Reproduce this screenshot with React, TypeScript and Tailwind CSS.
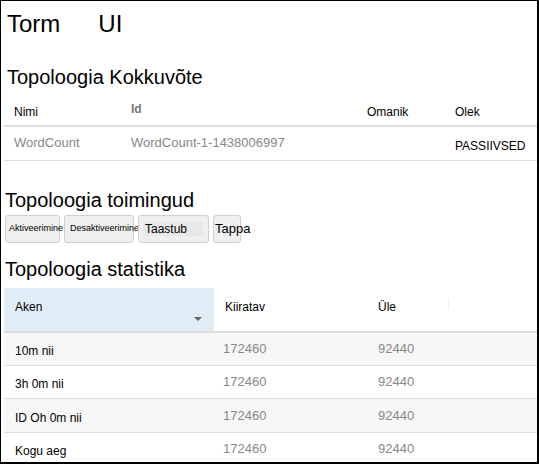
import React from "react";

const F = { fontFamily: '"Liberation Sans", Arial, sans-serif' };

function Caret() {
  return (
    <svg width="8" height="4" viewBox="0 0 8 4" className="absolute right-[11px] top-[29px]">
      <path d="M0 0 L8 0 L4 4 Z" fill="#666" />
    </svg>
  );
}

export default function App() {
  const rows = [
    { r: "10m nii", h: "h-[33px]" },
    { r: "3h 0m nii", h: "h-[33px]" },
    { r: "ID Oh 0m nii", h: "h-[34px]" },
    { r: "Kogu aeg", h: "h-[33px]" },
  ];
  return (
    <div
      style={F}
      className="w-[539px] h-[464px] bg-white overflow-hidden border-l border-t border-r-2 border-b-2 border-black text-black"
    >
      <div className="pl-[3px]">
        {/* Title */}
        <div className="mt-[9px] h-[28px] leading-[28px] text-[24px] flex gap-[38px] pl-[3px]">
          <span>Torm</span>
          <span>UI</span>
        </div>

        {/* Heading 1 */}
        <div className="mt-[27px] h-[24px] leading-[24px] text-[20px] pl-[3px]">Topoloogia Kokkuvõte</div>

        {/* Summary table */}
        <div className="flex h-[38px] border-b-2 border-[#dddddd] text-[12px] leading-[16px]">
          <div className="w-[117px] pl-[10px] pt-[15px]">Nimi</div>
          <div className="w-[236px] pl-[10px] pt-[12px] font-bold text-[#777777]">Id</div>
          <div className="w-[88px] pl-[10px] pt-[15px]">Omanik</div>
          <div className="flex-1 pl-[10px] pt-[15px]">Olek</div>
        </div>
        <div className="flex h-[34px] border-b border-[#dddddd] leading-[16px]">
          <div className="w-[117px] pl-[10px] pt-[8px] text-[13px] text-[#888888]">WordCount</div>
          <div className="w-[236px] pl-[10px] pt-[8px] text-[13px] text-[#888888]">WordCount-1-1438006997</div>
          <div className="w-[88px]"></div>
          <div className="flex-1 pl-[10px] pt-[11px] text-[12px]">PASSIIVSED</div>
        </div>

        {/* Heading 2 */}
        <div className="mt-[27px] h-[24px] leading-[24px] text-[20px] pl-[1px]">Topoloogia toimingud</div>

        {/* Buttons */}
        <div className="mt-[3px] flex gap-[4px] pl-[1px]">
          <button className="w-[55px] h-[28px] bg-[#efefef] border border-[#d0d0d0] rounded-[3px] flex items-center pl-[3px] text-[9px] whitespace-nowrap overflow-visible">
            Aktiveerimine
          </button>
          <button className="w-[70px] h-[28px] bg-[#efefef] border border-[#d0d0d0] rounded-[3px] flex items-center pl-[5px] text-[9px] whitespace-nowrap overflow-visible">
            Desaktiveerimine
          </button>
          <button className="w-[71px] h-[28px] bg-[#efefef] border border-[#d0d0d0] rounded-[3px] flex items-center pl-[4px] text-[12px] whitespace-nowrap">
            <span className="bg-[#e8e8e8] w-[60px] text-left pl-[2px] leading-[14px]">Taastub</span>
          </button>
          <button className="w-[28px] h-[28px] bg-[#efefef] border border-[#d0d0d0] rounded-[3px] flex items-center pl-[1px] text-[13px] whitespace-nowrap overflow-visible">
            Tappa
          </button>
        </div>

        {/* Heading 3 */}
        <div className="mt-[14px] h-[24px] leading-[24px] text-[20px] pl-[1px]">Topoloogia statistika</div>

        {/* Stats table */}
        <div className="mt-[7px]">
          <div className="flex h-[45px] border-b-2 border-[#dddddd] text-[12px] leading-[16px]">
            <div className="relative w-[209px] bg-[#e1edf6] pl-[11px] pt-[11px]">
              Aken
              <Caret />
            </div>
            <div className="w-[154px] pl-[11px] pt-[11px] border-l border-[#f3f0dc]">Kiiratav</div>
            <div className="relative w-[82px] pl-[11px] pt-[11px]">
              Üle
              <div className="absolute right-0 top-[10px] h-[12px] w-px bg-[#e0f4f7]" />
            </div>
            <div className="flex-1"></div>
          </div>
          {rows.map((row, i) => (
            <div
              key={row.r}
              className={`flex ${row.h} border-b border-[#dddddd] items-center ${i % 2 === 0 ? "bg-[#f7f7f7]" : "bg-white"}`}
            >
              <div className="w-[209px] pl-[11px] text-[12px] relative top-[2px]">{row.r}</div>
              <div className="w-[154px] pl-[10px] text-[13px] text-[#888888]">172460</div>
              <div className="w-[82px] pl-[11px] text-[13px] text-[#888888]">92440</div>
              <div className="flex-1"></div>
            </div>
          ))}
        </div>
      </div>
    </div>
  );
}
